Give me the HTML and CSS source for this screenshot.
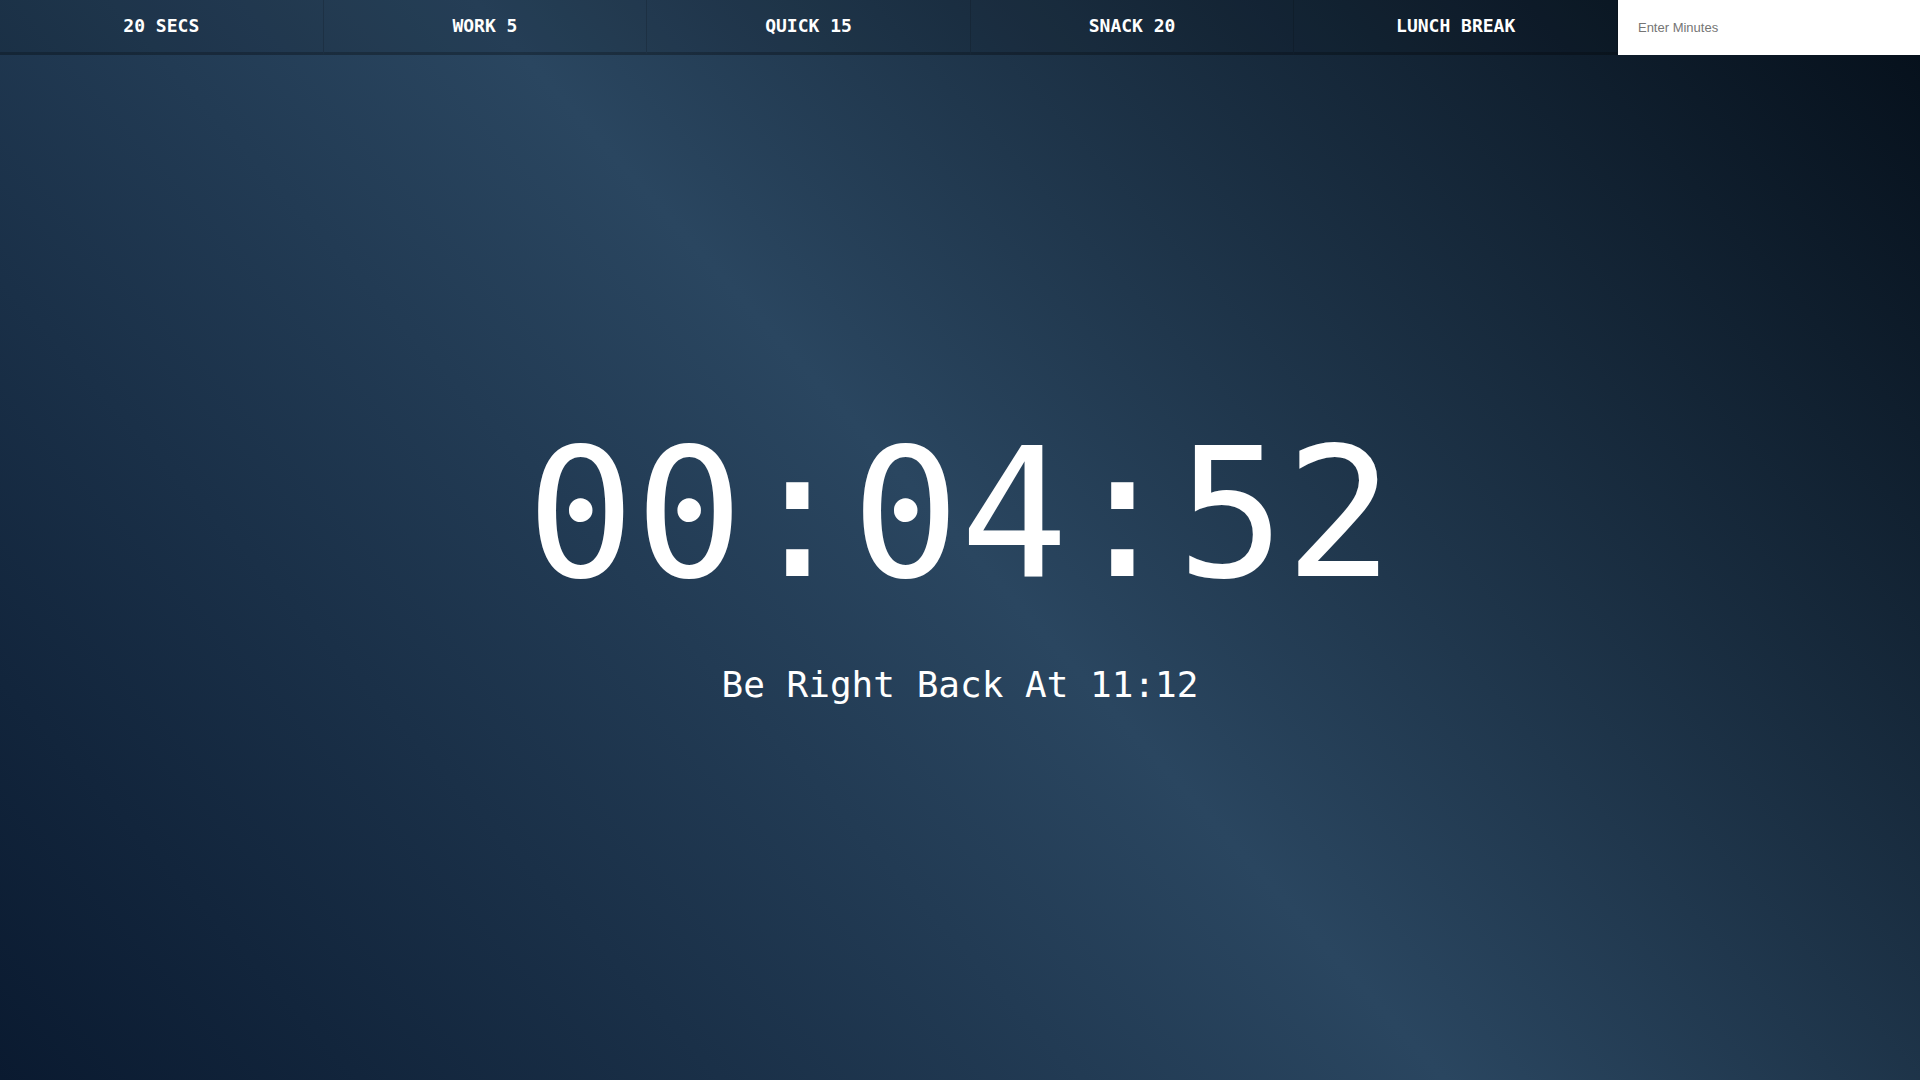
FILE: index.html
```html
<!DOCTYPE html>
<html lang="en">
<head>
<meta charset="utf-8">
<title>Break Timer</title>
<link rel="stylesheet" href="styles.css">
</head>
<body>
<nav class="timer-nav">
  <button class="nav-btn">20 SECS</button>
  <button class="nav-btn">WORK 5</button>
  <button class="nav-btn">QUICK 15</button>
  <button class="nav-btn">SNACK 20</button>
  <button class="nav-btn">LUNCH BREAK</button>
  <form class="custom-form">
    <input class="minutes-input" type="text" name="minutes" placeholder="Enter Minutes">
  </form>
</nav>
<main class="display">
  <h1 class="display-time">00:04:52</h1>
  <p class="display-end">Be Right Back At 11:12</p>
</main>
</body>
</html>
```
FILE: styles.css
```css
* { box-sizing: border-box; }
html, body {
  margin: 0;
  padding: 0;
  height: 100%;
}
body {
  min-height: 100vh;
  background: linear-gradient(48deg, #0a1a30 0%, #2a4660 50%, #050f1a 100%);
  background-attachment: fixed;
  font-family: "DejaVu Sans Mono", "Liberation Mono", monospace;
  color: #ffffff;
  overflow: hidden;
}
.timer-nav {
  display: flex;
  height: 55px;
  align-items: stretch;
}
.nav-btn {
  flex: 1 1 0;
  margin: 0;
  padding: 0;
  height: 55px;
  background: rgba(0, 0, 0, 0.1);
  border: 0;
  border-right: 1px solid rgba(0, 0, 0, 0.14);
  border-bottom: 3px solid rgba(0, 0, 0, 0.22);
  color: #ffffff;
  font-family: "DejaVu Sans Mono", "Liberation Mono", monospace;
  font-size: 18px;
  font-weight: bold;
  line-height: 52px;
  letter-spacing: 0;
}
.custom-form {
  flex: 0 0 302px;
  margin: 0;
  display: flex;
}
.minutes-input {
  width: 100%;
  height: 55px;
  margin: 0;
  border: 0;
  outline: none;
  background: #ffffff;
  padding: 0 0 0 20px;
  font-family: "Liberation Sans", Arial, sans-serif;
  font-size: 13px;
  color: #333333;
}
.minutes-input::placeholder {
  color: #757575;
}
.display {
  padding-top: 369px;
  text-align: center;
}
.display-time {
  margin: 0;
  font-size: 180px;
  font-weight: normal;
  line-height: 1;
  color: #ffffff;
}
.display-end {
  margin: 63px 0 0;
  font-size: 36px;
  line-height: 1;
  color: #ffffff;
}
```
